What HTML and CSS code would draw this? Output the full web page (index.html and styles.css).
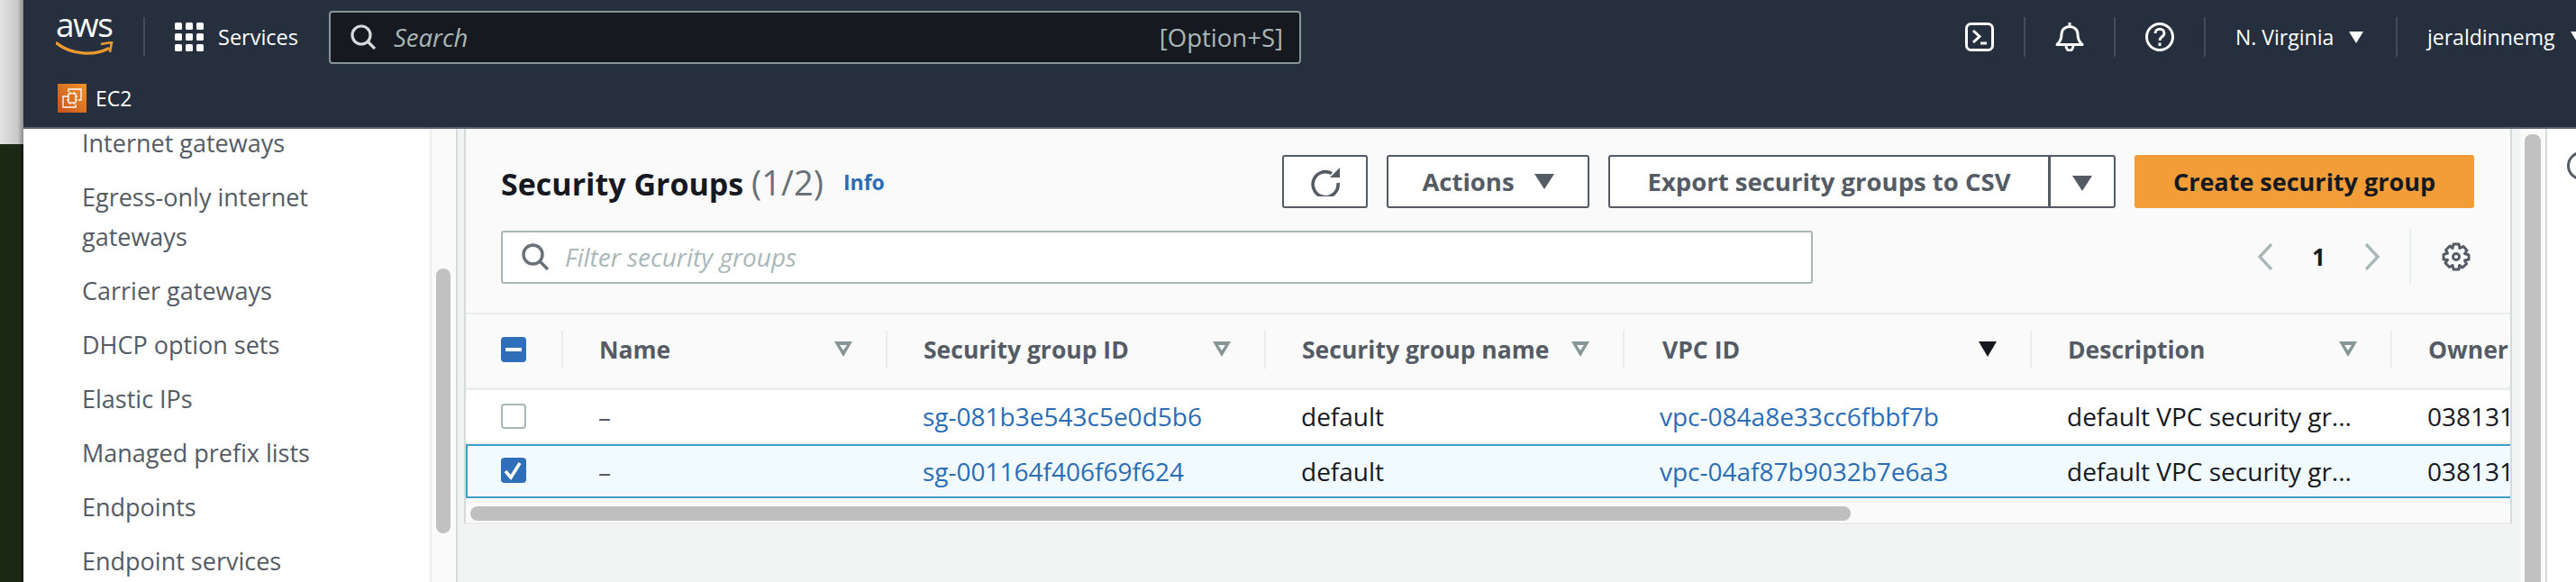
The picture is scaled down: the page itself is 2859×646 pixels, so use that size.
FILE: index.html
```html
<!DOCTYPE html>
<html lang="en">
<head>
    <meta charset="UTF-8">
    <meta name="viewport" content="width=device-width, initial-scale=1.0">
    <title>Security Groups | EC2</title>
    <link rel="stylesheet" href="styles.css">
</head>
<body>

    <div class="desktop-strip">
        <div class="strip-top"></div>
        <div class="strip-bottom"></div>
    </div>

    <div class="console">
        <header class="top-nav">
            <div class="nav-row">
                <div class="aws-logo">
                    <span class="aws-word">aws</span>
                    <svg class="aws-smile" width="64" height="16" viewBox="0 0 64 16">
                        <path d="M1 2C18 15 42 16 58 8" fill="none" stroke="#ec9a2e" stroke-width="3.4" stroke-linecap="round"/>
                        <path d="M50 3L62 1L60 12" fill="none" stroke="#ec9a2e" stroke-width="2.6"/>
                    </svg>
                </div>
                <span class="nav-divider logo-divider"></span>
                <svg class="services-grid" width="32" height="32" viewBox="0 0 32 32" fill="#fff">
                    <rect x="0" y="0" width="8" height="8" rx="1.5"/><rect x="12" y="0" width="8" height="8" rx="1.5"/><rect x="24" y="0" width="8" height="8" rx="1.5"/>
                    <rect x="0" y="12" width="8" height="8" rx="1.5"/><rect x="12" y="12" width="8" height="8" rx="1.5"/><rect x="24" y="12" width="8" height="8" rx="1.5"/>
                    <rect x="0" y="24" width="8" height="8" rx="1.5"/><rect x="12" y="24" width="8" height="8" rx="1.5"/><rect x="24" y="24" width="8" height="8" rx="1.5"/>
                </svg>
                <span class="services-label">Services</span>
                <div class="global-search">
                    <svg width="28" height="28" viewBox="0 0 28 28" fill="none" stroke="#d5dbdb" stroke-width="3.2">
                        <circle cx="12" cy="12" r="10"/>
                        <path d="M19 19L27 27"/>
                    </svg>
                    <span class="search-text">Search</span>
                    <span class="search-shortcut">[Option+S]</span>
                </div>
                <svg class="nav-icon console-icon" width="32" height="32" viewBox="0 0 32 32" fill="none" stroke="#fff" stroke-width="3">
                    <rect x="1.5" y="1.5" width="29" height="29" rx="5"/>
                    <path d="M9 9L16 15.500L9 22"/>
                    <path d="M17 23H24"/>
                </svg>
                <span class="nav-divider"></span>
                <svg class="nav-icon" width="32" height="32" viewBox="0 0 32 32" fill="none" stroke="#fff" stroke-width="3">
                    <path d="M2 24.500C6 21 7 18 7 13C7 8 11 4.500 16 4.500C21 4.500 25 8 25 13C25 18 26 21 30 24.500Z" stroke-linejoin="round"/>
                    <path d="M16 0V4"/>
                    <path d="M12 25C12 33 20 33 20 25"/>
                </svg>
                <span class="nav-divider"></span>
                <svg class="nav-icon" width="32" height="32" viewBox="0 0 32 32" fill="none" stroke="#fff" stroke-width="3">
                    <circle cx="16" cy="16" r="14.500"/>
                    <path d="M11 12C11 5.500 21 5.500 21 12C21 16 16 15.500 16 20"/>
                    <path d="M16 22.500V26"/>
                </svg>
                <span class="nav-divider"></span>
                <span class="nav-text region">N. Virginia</span>
                <span class="caret caret-white"></span>
                <span class="nav-divider region-divider"></span>
                <span class="nav-text account">jeraldinnemg</span>
                <span class="caret caret-white"></span>
            </div>
            <div class="service-row">
                <svg class="ec2-icon" width="32" height="32" viewBox="0 0 32 32">
                    <defs>
                        <linearGradient id="ec2-grad" x1="0" y1="1" x2="1" y2="0">
                            <stop offset="0" stop-color="#c8511b"/>
                            <stop offset="1" stop-color="#f0932b"/>
                        </linearGradient>
                    </defs>
                    <rect width="32" height="32" fill="url(#ec2-grad)"/>
                    <g fill="none" stroke="#fff" stroke-width="1.300">
                        <path d="M12 9V6H26V18H23"/>
                        <path d="M10 14H6V26H20V23"/>
                        <rect x="12" y="11" width="8" height="10"/>
                        <path d="M14 9V11M18 9V11M14 21V23M18 21V23M10 14H12M10 18H12M20 14H22M20 18H22"/>
                    </g>
                </svg>
                <span class="service-name">EC2</span>
            </div>
        </header>

        <div class="workspace">
            <nav class="side-nav">
                <ul class="side-list">
                    <li>Internet gateways</li>
                    <li>Egress-only internet gateways</li>
                    <li>Carrier gateways</li>
                    <li>DHCP option sets</li>
                    <li>Elastic IPs</li>
                    <li>Managed prefix lists</li>
                    <li>Endpoints</li>
                    <li>Endpoint services</li>
                </ul>
            </nav>
            <div class="side-gutter"><div class="side-thumb"></div></div>

            <main class="main-area">
                <section class="panel">
                    <div class="panel-head">
                        <h1 class="panel-title">Security Groups <span class="panel-count">(1/2)</span></h1>
                        <a class="info-link">Info</a>
                        <div class="panel-actions">
                            <button class="btn btn-refresh">
                                <svg width="34" height="32" viewBox="0 0 34 32" fill="none" stroke="#545b64" stroke-width="3.600">
                                    <path d="M24 6.500A14 14 0 1 0 31 17"/>
                                    <path d="M33 0V11H22Z" fill="#545b64" stroke="none"/>
                                </svg>
                            </button>
                            <button class="btn btn-actions">Actions <span class="caret caret-grey"></span></button>
                            <div class="btn-split">
                                <button class="split-main">Export security groups to CSV</button>
                                <button class="split-caret"><span class="caret caret-grey"></span></button>
                            </div>
                            <button class="btn-primary">Create security group</button>
                        </div>
                    </div>

                    <div class="panel-filter">
                        <div class="filter-input">
                            <svg width="30" height="30" viewBox="0 0 30 30" fill="none" stroke="#687078" stroke-width="3.4">
                                <circle cx="12.500" cy="12.500" r="10.500"/>
                                <path d="M20 20L29 29"/>
                            </svg>
                            <span class="filter-placeholder">Filter security groups</span>
                        </div>
                        <div class="pager">
                            <svg width="18" height="30" viewBox="0 0 18 30" fill="none" stroke="#aab7b8" stroke-width="3.4"><path d="M16 1L3 15L16 29"/></svg>
                            <span class="pager-num">1</span>
                            <svg width="18" height="30" viewBox="0 0 18 30" fill="none" stroke="#aab7b8" stroke-width="3.4"><path d="M2 1L15 15L2 29"/></svg>
                            <span class="pager-divider"></span>
                            <svg class="gear" width="32" height="32" viewBox="0 0 32 32" fill="none" stroke="#545b64">
                                <path d="M13 2H19L20 6.500L24 4.500L28 9L25.500 12.500L30 14V19L25.500 20L27.500 24L23 28L19.500 25.500L19 30H13L12 25.500L8.500 27.500L4 23L6.500 19.500L2 19V13.500L6.500 12L4.500 8.500L9 4L12 6.500Z" stroke-width="3" stroke-linejoin="round"/>
                                <circle cx="16" cy="16" r="3.500" stroke-width="3"/>
                            </svg>
                        </div>
                    </div>

                    <div class="sg-table">
                        <div class="sg-row sg-head">
                            <div class="sg-cell cell-check"><span class="check check-mixed"></span></div>
                            <div class="sg-cell">Name <span class="sort-icon"></span></div>
                            <div class="sg-cell">Security group ID <span class="sort-icon"></span></div>
                            <div class="sg-cell">Security group name <span class="sort-icon"></span></div>
                            <div class="sg-cell">VPC ID <span class="sort-active"></span></div>
                            <div class="sg-cell">Description <span class="sort-icon"></span></div>
                            <div class="sg-cell">Owner</div>
                        </div>
                        <div class="sg-row sg-data">
                            <div class="sg-cell cell-check"><span class="check"></span></div>
                            <div class="sg-cell cell-dash">–</div>
                            <div class="sg-cell"><a class="res-link">sg-081b3e543c5e0d5b6</a></div>
                            <div class="sg-cell">default</div>
                            <div class="sg-cell"><a class="res-link">vpc-084a8e33cc6fbbf7b</a></div>
                            <div class="sg-cell"><span class="cell-clip">default VPC security gr...</span></div>
                            <div class="sg-cell">038131</div>
                        </div>
                        <div class="sg-row sg-data sg-selected">
                            <div class="sg-cell cell-check">
                                <span class="check check-on">
                                    <svg width="28" height="28" viewBox="0 0 28 28" fill="none" stroke="#fff" stroke-width="3.600"><path d="M5 15L11 22L21 6"/></svg>
                                </span>
                            </div>
                            <div class="sg-cell cell-dash">–</div>
                            <div class="sg-cell"><a class="res-link">sg-001164f406f69f624</a></div>
                            <div class="sg-cell">default</div>
                            <div class="sg-cell"><a class="res-link">vpc-04af87b9032b7e6a3</a></div>
                            <div class="sg-cell"><span class="cell-clip">default VPC security gr...</span></div>
                            <div class="sg-cell">038131</div>
                        </div>
                    </div>

                    <div class="table-scroll"><div class="table-thumb"></div></div>
                </section>
            </main>

            <div class="main-gutter"><div class="main-thumb"></div></div>
            <aside class="tools-rail"><span class="tools-circle"></span></aside>
        </div>
    </div>

</body>
</html>
```

FILE: styles.css
```css
* {
    box-sizing: border-box;
}

html, body {
    height: 100%;
}

body {
    margin: 0;
    display: flex;
    width: 2859px;
    height: 646px;
    overflow: hidden;
    font-family: "Open Sans", "Noto Sans", sans-serif;
    color: #16191f;
    background-color: #fff;
}

/* desktop showing behind the browser window */
.desktop-strip {
    width: 26px;
    flex-shrink: 0;
    display: flex;
    flex-direction: column;
}

.strip-top {
    height: 160px;
    background: linear-gradient(to right, #e2e2e2, #c9c9c9 75%, #8d8d8d);
}

.strip-bottom {
    flex: 1;
    background: linear-gradient(to right, #1b2814 85%, #10170c);
}

.console {
    flex: 1;
    min-width: 0;
    height: 646px;
    display: flex;
    flex-direction: column;
}

/* top navigation */
.top-nav {
    height: 143px;
    flex-shrink: 0;
    background-color: #252f3e;
    border-bottom: 2px solid #59626e;
    color: #fff;
}

.nav-row {
    height: 82px;
    display: flex;
    align-items: center;
    padding-left: 36px;
    white-space: nowrap;
}

.nav-row > * {
    flex-shrink: 0;
}

.aws-logo {
    width: 64px;
    height: 40px;
    position: relative;
}

.aws-word {
    display: block;
    font-family: "Open Sans", sans-serif;
    font-size: 37px;
    line-height: 30px;
    letter-spacing: -1.5px;
    margin-top: -9px;
}

.aws-smile {
    position: absolute;
    left: 0;
    top: 25px;
}

.nav-divider {
    width: 2px;
    height: 44px;
    background-color: #414d5c;
    margin: 0 33px;
}

.services-label {
    width: 89px;
    font-size: 23.5px;
    margin-left: 16px;
}

.global-search {
    width: 1079px;
    height: 59px;
    margin-left: 34px;
    display: flex;
    align-items: center;
    padding: 0 18px 0 22px;
    background-color: #16191f;
    border: 2px solid #879596;
    border-radius: 4px;
    color: #aab7b8;
    font-size: 27.5px;
}

.search-text {
    font-style: italic;
    margin-left: 20px;
}

.search-shortcut {
    margin-left: auto;
}

.console-icon {
    margin-left: 737px;
}

.nav-text {
    font-size: 23px;
}

.region {
    width: 113px;
}

.region-divider {
    margin-left: 36px;
}

.account {
    width: 146px;
}

.caret {
    display: inline-block;
    width: 0;
    height: 0;
    flex-shrink: 0;
}

.caret-white {
    border-left: 8px solid transparent;
    border-right: 8px solid transparent;
    border-top: 13px solid #fff;
    margin-left: 13px;
}

.caret-grey {
    border-left: 11px solid transparent;
    border-right: 11px solid transparent;
    border-top: 17px solid #545b64;
}

.service-row {
    height: 59px;
    display: flex;
    align-items: center;
    padding-left: 38px;
    margin-top: -3px;
}

.service-name {
    font-size: 23px;
    margin-left: 10px;
}

/* main layout */
.workspace {
    flex: 1;
    min-height: 0;
    display: flex;
}

.side-nav {
    width: 453px;
    flex-shrink: 0;
    background-color: #fff;
    border-right: 2px solid #eaeded;
}

.side-list {
    list-style: none;
    margin: 0;
    padding: 0 40px 0 65px;
    color: #545b64;
    font-size: 27px;
    line-height: 44px;
}

.side-list li {
    margin-bottom: 16px;
}

/* first item is scrolled up against the header */
.side-list li:first-child {
    line-height: 32px;
    margin-bottom: 22px;
}

.side-list li:last-child {
    margin-bottom: 0;
}

.side-gutter {
    width: 29px;
    flex-shrink: 0;
    padding: 155px 6px 0 5px;
    background-color: #fafafa;
    border-right: 2px solid #d5dbdb;
}

.side-thumb {
    height: 294px;
    background-color: #c1c1c1;
    border-radius: 8px;
}

.main-area {
    width: 2289px;
    flex-shrink: 0;
    padding-left: 7px;
    background-color: #f2f3f3;
}

.panel {
    width: 2273px;
    height: 439px;
    background-color: #fafafa;
    border-left: 2px solid #d5dbdb;
    border-right: 2px solid #d5dbdb;
    border-bottom: 2px solid #eaeded;
}

.panel-head {
    display: flex;
    align-items: center;
    padding: 29px 40px 0 39px;
}

.panel-title {
    margin: 0;
    font-size: 34px;
    font-weight: 700;
}

.panel-count {
    font-weight: 400;
    font-size: 38px;
    color: #687078;
}

.info-link {
    margin-left: 22px;
    color: #2a6db5;
    font-size: 23px;
    font-weight: 700;
}

.panel-actions {
    margin-left: auto;
    display: flex;
    gap: 21px;
}

.btn,
.split-main,
.split-caret {
    height: 59px;
    padding: 0;
    background-color: #fff;
    border: 2px solid #545b64;
    border-radius: 3px;
    color: #545b64;
    font-family: inherit;
    font-size: 27.5px;
    font-weight: 700;
}

.btn-refresh {
    width: 95px;
    display: flex;
    align-items: center;
    justify-content: center;
}

.btn-actions {
    width: 225px;
    display: flex;
    align-items: center;
    justify-content: center;
    gap: 22px;
}

.btn-split {
    display: flex;
}

.split-main {
    width: 490px;
    border-radius: 3px 0 0 3px;
}

.split-caret {
    width: 74px;
    margin-left: -1px;
    border-radius: 0 3px 3px 0;
}

.btn-primary {
    width: 377px;
    height: 59px;
    padding: 0;
    background-color: #f29d38;
    border: none;
    border-radius: 3px;
    color: #16191f;
    font-family: inherit;
    font-size: 27px;
    font-weight: 700;
}

.panel-filter {
    display: flex;
    align-items: center;
    padding: 24px 44px 0 39px;
}

.filter-input {
    width: 1456px;
    height: 59px;
    display: flex;
    align-items: center;
    padding-left: 21px;
    background-color: #fff;
    border: 2px solid #aab7b8;
    border-radius: 3px;
}

.filter-placeholder {
    margin-left: 18px;
    color: #aab7b8;
    font-size: 28px;
    font-style: italic;
}

.pager {
    margin-left: auto;
    display: flex;
    align-items: center;
}

.pager-num {
    width: 101px;
    text-align: center;
    font-size: 26px;
    font-weight: 700;
}

.pager-divider {
    width: 2px;
    height: 60px;
    margin: 0 34px 0 32px;
    background-color: #eaeded;
}

/* security group table */
.sg-table {
    margin-top: 32px;
    border-top: 2px solid #eaeded;
    overflow: hidden;
}

.sg-row {
    display: grid;
    grid-template-columns: 108px 360px 420px 398px 452px 400px 300px;
    align-items: center;
    width: 2269px;
}

.sg-head {
    height: 84px;
    padding-bottom: 4px;
    border-bottom: 3px solid #eaeded;
    color: #545b64;
    font-size: 26.5px;
    font-weight: 700;
}

.sg-head .sg-cell {
    height: 42px;
    display: flex;
    align-items: center;
    justify-content: space-between;
    padding: 0 37px 0 40px;
    border-right: 2px solid #eaeded;
    white-space: nowrap;
}

.sg-head .sg-cell:nth-child(5) {
    padding-left: 42px;
}

.sg-head .sg-cell:last-child {
    border-right: none;
    justify-content: flex-start;
}

.sg-head .cell-check {
    padding: 0 0 0 39px;
}

.sg-data {
    height: 60px;
    background-color: #fff;
    font-size: 28px;
    border-bottom: 2px solid #eaeded;
}

.sg-data .sg-cell {
    padding-left: 39px;
    white-space: nowrap;
}

.sg-selected {
    width: 2275px;
    background-color: #f1faff;
    border-bottom: none;
    box-shadow: inset 0 0 0 2px #3f9fc9;
}

.sg-selected .cell-check {
    margin-top: -2px;
}

.cell-dash {
    color: #545b64;
}

.cell-clip {
    display: block;
    width: 330px;
    overflow: hidden;
}

.res-link {
    color: #2a6db5;
}

.check {
    display: block;
    width: 28px;
    height: 28px;
    background-color: #fff;
    border: 2px solid #aab7b8;
    border-radius: 4px;
}

.check-on,
.check-mixed {
    background-color: #2f6fb9;
    border: none;
}

.check-mixed {
    display: flex;
    align-items: center;
    justify-content: center;
}

.check-mixed::before {
    content: "";
    width: 18px;
    height: 4px;
    background-color: #fff;
}

.check-on svg {
    display: block;
}

.sort-icon,
.sort-active {
    display: inline-block;
    width: 20px;
    height: 17px;
    flex-shrink: 0;
    clip-path: polygon(0 0, 100% 0, 50% 100%);
}

.sort-icon {
    background: #879596;
    position: relative;
}

.sort-icon::after {
    content: "";
    position: absolute;
    left: 6px;
    top: 4px;
    width: 8px;
    height: 6px;
    background: #fafafa;
    clip-path: polygon(0 0, 100% 0, 50% 100%);
}

.sort-active {
    background: #16191f;
}

.table-scroll {
    height: 29px;
    padding: 9px 0 0 5px;
}

.table-thumb {
    width: 1532px;
    height: 16px;
    background-color: #bfbfbf;
    border-radius: 8px;
}

/* right side */
.main-gutter {
    width: 30px;
    flex-shrink: 0;
    padding: 6px 5px 0 5px;
    background-color: #fafafa;
    border-right: 2px solid #d5dbdb;
}

.main-thumb {
    height: 497px;
    background-color: #c1c1c1;
    border-radius: 8px 8px 0 0;
}

.tools-rail {
    flex: 1;
    min-width: 0;
    background-color: #fff;
    padding: 25px 0 0 22px;
    overflow: hidden;
}

.tools-circle {
    display: block;
    width: 32px;
    height: 32px;
    border: 3px solid #545b64;
    border-radius: 50%;
}
```
